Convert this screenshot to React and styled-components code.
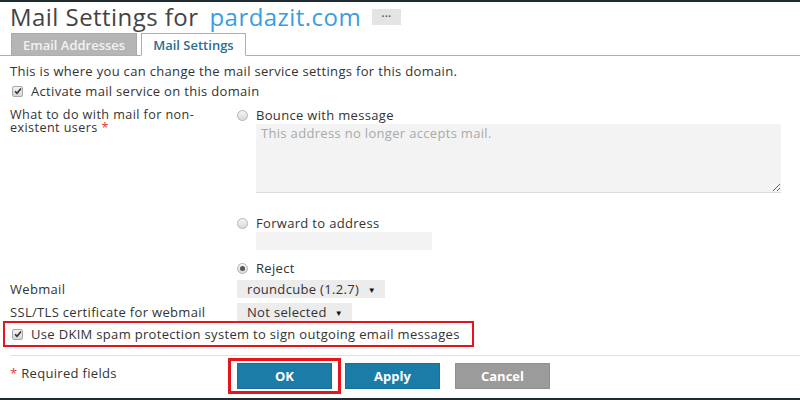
import React from 'react';
import styled, { createGlobalStyle } from 'styled-components';

const Global = createGlobalStyle`
  html, body { margin: 0; padding: 0; background: #fff; }
  body {
    font-family: "Open Sans", "Liberation Sans", sans-serif;
    font-size: 13px;
    letter-spacing: 0.32px;
    color: #333;
  }
  * { box-sizing: border-box; }
`;

const Page = styled.div`
  width: 800px;
  height: 400px;
  border-top: 2px solid #1f2a31;
  border-bottom: 2px solid #1f2a31;
  display: flex;
  flex-direction: column;
  overflow: hidden;
`;

const TitleRow = styled.div`
  display: flex;
  align-items: center;
  padding: 1px 0 0 10px;
  height: 29px;
`;

const Title = styled.h1`
  margin: 0;
  font-weight: 400;
  font-size: 24px;
  line-height: 28px;
  color: #444;
  letter-spacing: 0.45px;
`;

const Domain = styled.span`
  color: #3a9de0;
  margin-left: 11px;
`;

const MoreButton = styled.span`
  margin-left: 11px;
  width: 29px;
  height: 16px;
  background: #e4e4e4;
  display: flex;
  align-items: center;
  justify-content: center;
  font-size: 10px;
  font-weight: 700;
  color: #555;
  letter-spacing: 0.5px;
  line-height: 1;
  padding-bottom: 3px;
`;

const TabBar = styled.div`
  display: flex;
  gap: 4px;
  padding-left: 11px;
  margin-top: 2px;
  border-bottom: 1px solid #86bccf;
  height: 23px;
`;

const Tab = styled.div`
  height: ${p => (p.$active ? '23px' : '22px')};
  padding: 0 11px;
  display: flex;
  align-items: center;
  font-size: 13px;
  font-weight: 600;
  letter-spacing: 0;
  color: ${p => (p.$active ? '#2b6e8e' : '#f2f2f2')};
  background: ${p => (p.$active ? '#fff' : '#b5b5b5')};
  border: 1px solid ${p => (p.$active ? '#86bccf' : '#a9a9a9')};
  border-bottom: ${p => (p.$active ? '1px solid #fff' : 'none')};
`;

const Intro = styled.p`
  margin: 7px 0 0 10px;
  line-height: 16px;
`;

const CheckRow = styled.label`
  display: flex;
  align-items: center;
  gap: 8px;
  padding-left: 12px;
  margin-top: 4px;
  height: 16px;
`;

const Box = styled.span`
  width: 11px;
  height: 11px;
  flex: none;
  border: 1px solid #a8a8a8;
  border-radius: 2px;
  background: linear-gradient(#f2f2f2, #d6d6d6);
  display: flex;
  align-items: center;
  justify-content: center;
`;

const Check = () => (
  <Box>
    <svg width="8" height="8" viewBox="0 0 8 8">
      <path d="M1 4.2 L3 6.2 L7 1.5" fill="none" stroke="#333" strokeWidth="1.6" />
    </svg>
  </Box>
);

const Form = styled.div`
  display: grid;
  grid-template-columns: 227px 1fr;
  padding-left: 10px;
  margin-top: 9px;
  row-gap: 5px;
`;

const FieldLabel = styled.div`
  width: 200px;
  font-size: 12.6px;
  letter-spacing: 0.42px;
  line-height: 13px;
`;

const Star = styled.span`
  color: #d53a3a;
`;

const Options = styled.div`
  display: flex;
  flex-direction: column;
`;

const Option = styled.div`
  display: flex;
  align-items: center;
  gap: 8px;
  height: 14px;
  margin-top: ${p => p.$mt || 0}px;
`;

const Radio = styled.span`
  width: 11px;
  height: 11px;
  border-radius: 50%;
  border: 1px solid #b4b4b4;
  background: linear-gradient(#f6f6f6, #d9d9d9);
  display: flex;
  align-items: center;
  justify-content: center;
  &::after {
    content: '';
    width: 5px;
    height: 5px;
    border-radius: 50%;
    background: ${p => (p.$on ? '#555' : 'transparent')};
  }
`;

const TextArea = styled.textarea`
  margin: 2px 0 0 19px;
  width: 525px;
  height: 69px;
  border: none;
  border-bottom: 1px solid #dcdcdc;
  background: #f3f3f3;
  font-family: inherit;
  font-size: 13px;
  letter-spacing: 0.32px;
  padding: 0 5px;
  resize: vertical;
  outline: none;
  &::placeholder { color: #a9a9a9; }
`;

const TextInput = styled.input`
  margin: 2px 0 0 19px;
  width: 176px;
  height: 18px;
  border: none;
  background: #f3f3f3;
  outline: none;
`;

const SelectBox = styled.div`
  width: ${p => p.$w}px;
  height: 18px;
  background: #ececec;
  display: flex;
  align-items: center;
  justify-content: space-between;
  padding: 0 9px 0 10px;
  color: #333;
  span { font-size: 8px; color: #111; }
`;

const RowLabel = styled.div`
  display: flex;
  align-items: center;
`;

const Highlight = styled.div`
  margin: 0 0 0 3px;
  width: 471px;
  height: 26px;
  border: 2px solid #e8141c;
  display: flex;
  align-items: center;
  gap: 8px;
  padding-left: 7px;
`;

const Footer = styled.div`
  margin: 8px 0 0 10px;
  border-top: 1px solid #e2e2e2;
  display: flex;
  align-items: flex-start;
  padding-top: 2px;
`;

const Required = styled.div`
  width: 218px;
  padding-top: 7px;
  line-height: 16px;
`;

const OkFrame = styled.div`
  border: 3px solid #e8141c;
  padding: 2px 6px;
  margin-right: 4px;
`;

const Button = styled.button`
  width: 95px;
  height: 26px;
  border: 1px solid ${p => (p.$gray ? '#8f8f8f' : '#15709b')};
  background: ${p => (p.$gray ? '#9b9b9b' : '#1b7ca8')};
  color: #fff;
  font-family: inherit;
  font-size: 13px;
  font-weight: 700;
  margin: ${p => p.$m || '0'};
`;

const App = () => (
  <>
    <Global />
    <Page>
      <TitleRow>
        <Title>
          Mail Settings for<Domain>pardazit.com</Domain>
        </Title>
        <MoreButton>···</MoreButton>
      </TitleRow>
      <TabBar>
        <Tab>Email Addresses</Tab>
        <Tab $active>Mail Settings</Tab>
      </TabBar>
      <Intro>This is where you can change the mail service settings for this domain.</Intro>
      <CheckRow>
        <Check />
        Activate mail service on this domain
      </CheckRow>
      <Form>
        <FieldLabel>
          What to do with mail for non-existent users <Star>*</Star>
        </FieldLabel>
        <Options>
          <Option>
            <Radio />
            Bounce with message
          </Option>
          <TextArea placeholder="This address no longer accepts mail." readOnly />
          <Option $mt={23}>
            <Radio />
            Forward to address
          </Option>
          <TextInput readOnly />
          <Option $mt={11}>
            <Radio $on />
            Reject
          </Option>
        </Options>
        <RowLabel>Webmail</RowLabel>
        <SelectBox $w={148}>
          roundcube (1.2.7) <span>▼</span>
        </SelectBox>
        <RowLabel>SSL/TLS certificate for webmail</RowLabel>
        <SelectBox $w={115}>
          Not selected <span>▼</span>
        </SelectBox>
      </Form>
      <Highlight>
        <Check />
        Use DKIM spam protection system to sign outgoing email messages
      </Highlight>
      <Footer>
        <Required>
          <Star>*</Star> Required fields
        </Required>
        <OkFrame>
          <Button>OK</Button>
        </OkFrame>
        <Button $m="5px 15px 0 0">Apply</Button>
        <Button $gray $m="5px 0 0 0">Cancel</Button>
      </Footer>
    </Page>
  </>
);

export default App;
